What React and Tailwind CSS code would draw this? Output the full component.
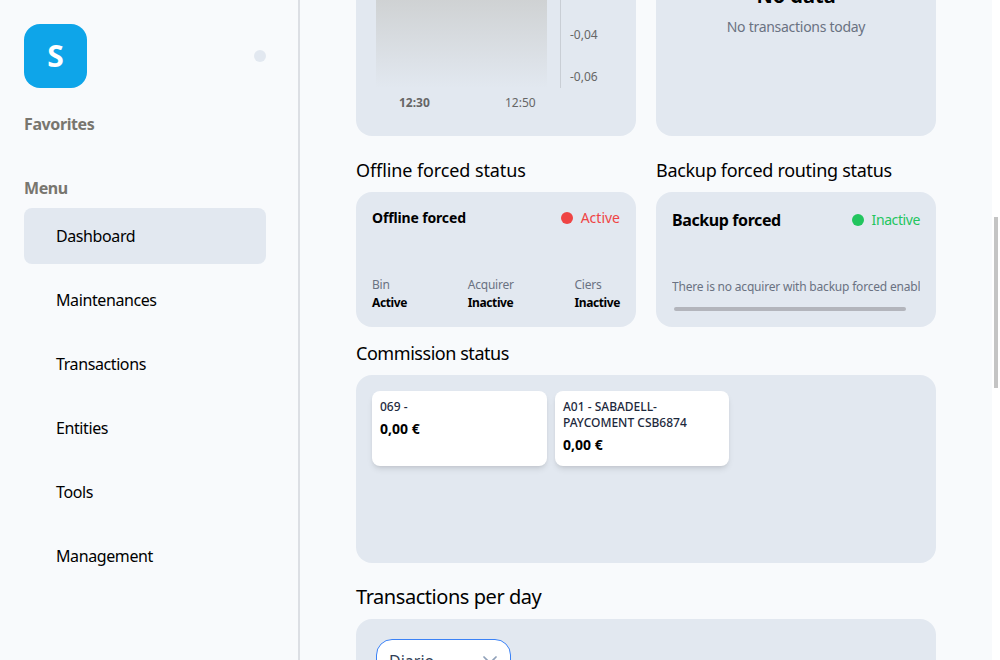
import React from 'react';
import { X } from 'lucide-react';

const menu = ['Dashboard', 'Maintenances', 'Transactions', 'Entities', 'Tools', 'Management'];

const StatusDot = ({ label, color, dot }) => (
    <div className={`flex items-center gap-2 text-sm ${color}`}>
        <span className={`w-3 h-3 rounded-full ${dot}`} />
        {label}
    </div>
);

const Stat = ({ label, value }) => (
    <div className="text-xs leading-[18px] tracking-[-0.25px]">
        <div className="text-gray-500">{label}</div>
        <div className="font-bold text-black tracking-[-0.4px]">{value}</div>
    </div>
);

const Commission = ({ lines, amount, width }) => (
    <div className={`${width} h-[75px] bg-white rounded-lg shadow-md px-2 pt-2`}>
        <div className="text-xs leading-4 font-medium text-slate-800">
            {lines.map((line) => <div key={line}>{line}</div>)}
        </div>
        <div className="text-sm leading-5 font-bold text-black mt-1">{amount}</div>
    </div>
);

export default function App() {
    return (
        <div className="flex w-[1000px] h-[660px] overflow-hidden bg-white font-['Noto_Sans',sans-serif] text-black">
            <aside className="w-[300px] shrink-0 bg-[#f8fafc] border-r-2 border-[#dcdfe4] pl-6 pr-8 pt-6">
                <div className="flex items-center justify-between">
                    <div className="w-[63px] h-16 rounded-2xl bg-[#0ea5e9] flex items-center justify-center text-white text-3xl font-bold">S</div>
                    <span className="w-3 h-3 rounded-full bg-slate-200" />
                </div>
                <div className="mt-6 text-base font-bold text-[#78766f] tracking-[-0.4px]">Favorites</div>
                <div className="mt-10 text-base font-bold text-[#78766f] tracking-[-0.4px]">Menu</div>
                <nav className="mt-2 flex flex-col gap-2">
                    {menu.map((item, i) => (
                        <div key={item} className={`h-14 flex items-center pl-8 rounded-lg text-base tracking-[-0.4px] ${i === 0 ? 'bg-slate-200' : ''}`}>{item}</div>
                    ))}
                </nav>
            </aside>

            <main className="w-[692px] shrink-0 bg-[#f8fafc] px-14 overflow-hidden">
                <div className="-mt-[200px] grid grid-cols-2 gap-5">
                    <div className="h-[336px] bg-slate-200 rounded-2xl relative">
                        <div className="absolute left-5 top-[180px] w-[171px] h-[108px] bg-gradient-to-b from-[#cbcdcd] to-[#e2e8f0]" />
                        <div className="absolute left-[204px] top-[180px] h-[108px] border-l border-[#c9ced5]" />
                        <div className="absolute left-[214px] top-[227px] text-xs text-[#666666]">-0,04</div>
                        <div className="absolute left-[214px] top-[269px] text-xs text-[#666666]">-0,06</div>
                        <div className="absolute left-[43px] top-[295px] text-xs font-bold text-[#666666]">12:30</div>
                        <div className="absolute left-[149px] top-[295px] text-xs text-[#666666]">12:50</div>
                    </div>
                    <div className="h-[336px] bg-slate-200 rounded-2xl flex flex-col items-center justify-start pt-[182px]">
                        <div className="text-xl font-bold leading-7">No data</div>
                        <div className="text-sm leading-5 text-gray-500 mt-[7px] tracking-[-0.28px]">No transactions today</div>
                    </div>
                </div>

                <div className="mt-[22px] grid grid-cols-2 gap-5">
                    <div>
                        <h2 className="text-lg leading-6 tracking-[-0.1px]">Offline forced status</h2>
                        <div className="mt-[10px] h-[135px] bg-slate-200 rounded-2xl px-4 pt-4 pb-[15px] flex flex-col justify-between">
                            <div className="flex justify-between items-start">
                                <div className="text-sm font-bold tracking-[-0.15px]">Offline forced</div>
                                <StatusDot label="Active" color="text-[#ef4444]" dot="bg-[#ef4444]" />
                            </div>
                            <div className="flex justify-between">
                                <Stat label="Bin" value="Active" />
                                <Stat label="Acquirer" value="Inactive" />
                                <Stat label="Ciers" value="Inactive" />
                            </div>
                        </div>
                    </div>
                    <div>
                        <h2 className="text-lg leading-6 tracking-[-0.3px]">Backup forced routing status</h2>
                        <div className="mt-[10px] h-[135px] bg-slate-200 rounded-2xl p-4 flex flex-col">
                            <div className="flex justify-between items-center">
                                <div className="text-base font-bold tracking-[-0.4px]">Backup forced</div>
                                <StatusDot label="Inactive" color="text-[#22c55e] tracking-[-0.4px]" dot="bg-[#22c55e]" />
                            </div>
                            <div className="mt-auto overflow-hidden">
                                <div className="text-xs text-gray-500 whitespace-nowrap tracking-[-0.2px]">There is no acquirer with backup forced enabled</div>
                                <div className="mt-3 mx-0.5 w-[232px] h-1 rounded-full bg-[#b3b5bc]" />
                            </div>
                        </div>
                    </div>
                </div>

                <h2 className="mt-[14px] text-lg leading-6 tracking-[-0.45px]">Commission status</h2>
                <div className="mt-[10px] h-[188px] bg-slate-200 rounded-2xl p-4 flex items-start gap-2">
                    <Commission width="w-[175px]" lines={['069 -']} amount="0,00 €" />
                    <Commission width="w-[174px]" lines={['A01 - SABADELL-', 'PAYCOMENT CSB6874']} amount="0,00 €" />
                </div>

                <h2 className="mt-5 text-xl leading-7 tracking-[-0.45px]">Transactions per day</h2>
                <div className="mt-2 h-40 bg-slate-200 rounded-2xl px-5 pt-5">
                    <div className="w-[135px] h-12 bg-white border border-[#3b82f6] rounded-2xl flex items-center justify-between pl-3 pr-2">
                        <span className="text-base text-slate-700 mb-1">Diario</span>
                        <X size={24} strokeWidth={1.75} className="text-slate-400" />
                    </div>
                </div>
            </main>

            <div className="flex-1 pt-[217px] pl-0.5">
                <div className="w-1 h-[171px] bg-[#c4c4c4]" />
            </div>
        </div>
    );
}
